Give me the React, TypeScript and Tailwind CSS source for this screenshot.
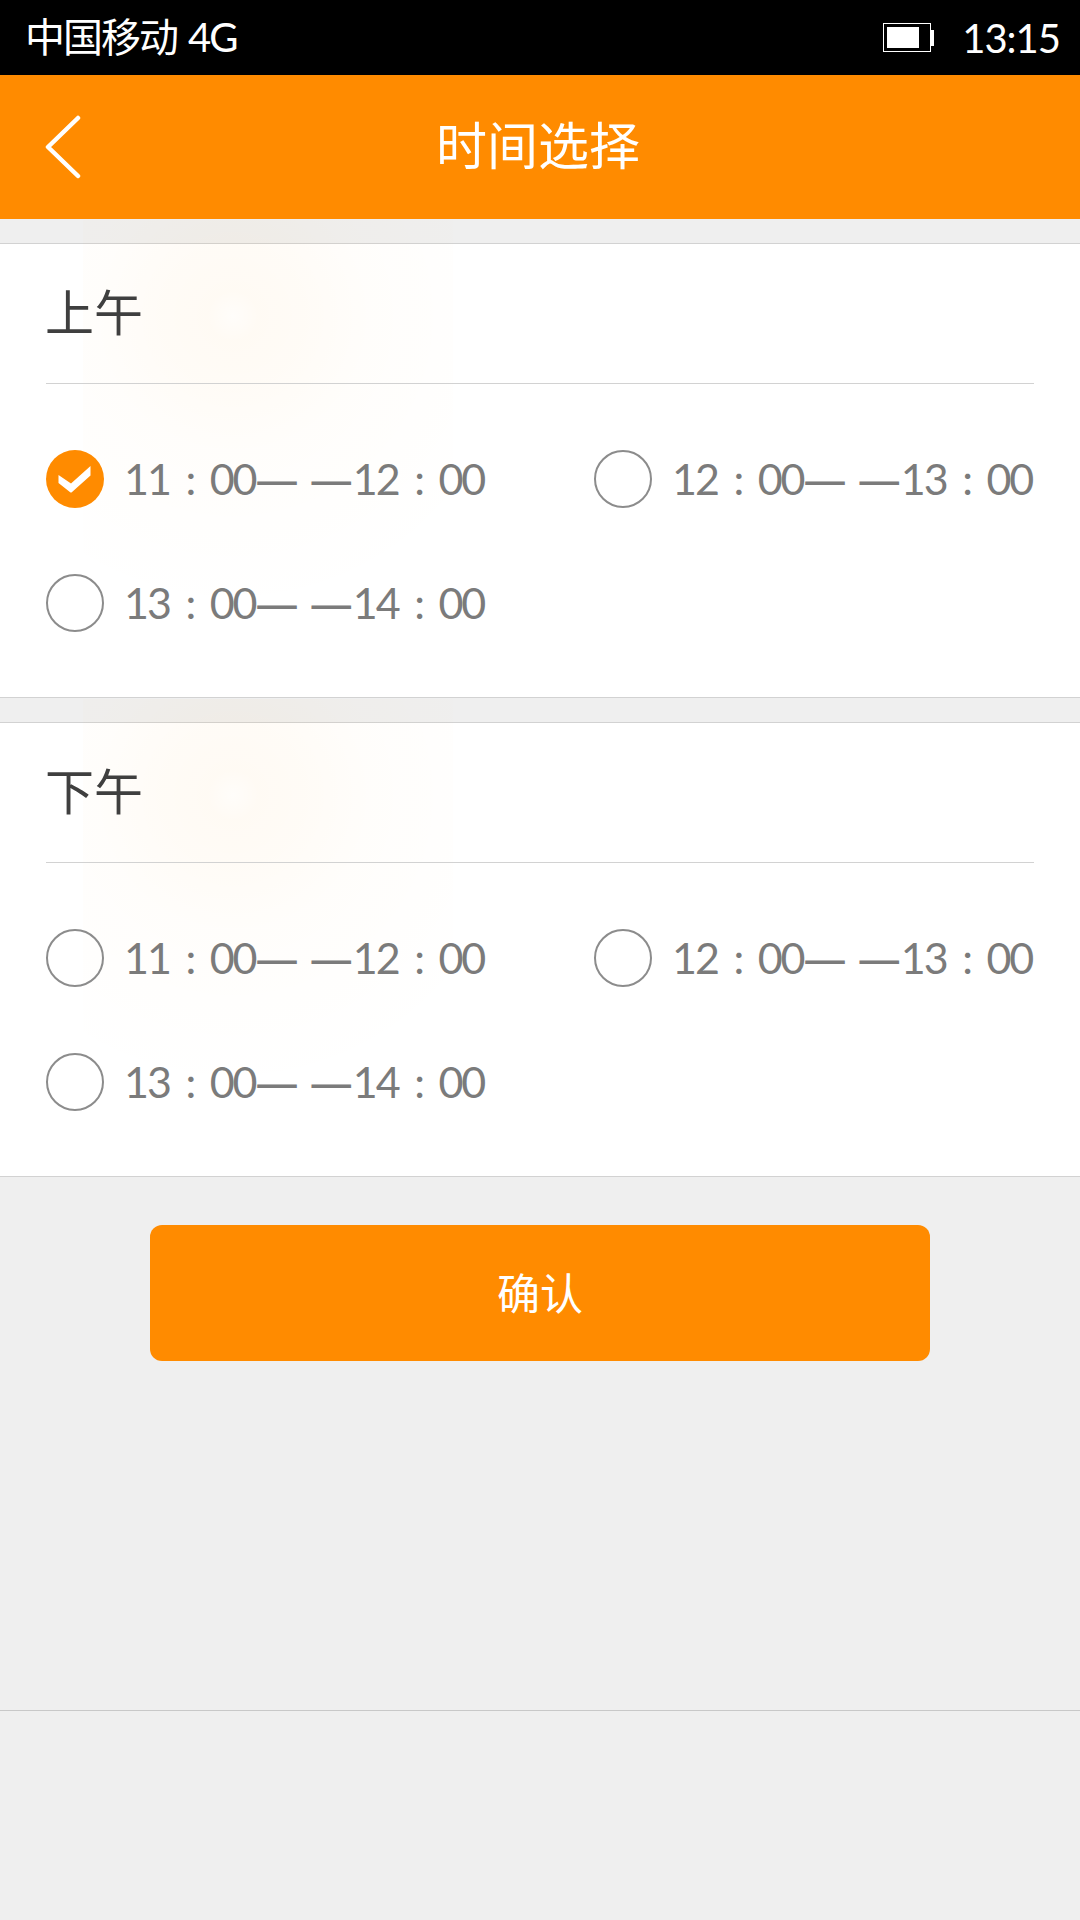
const cjk = "font-['Noto_Sans_CJK_SC','Noto_Sans',sans-serif]";

function Check() {
  return (
    <svg width="58" height="58" viewBox="0 0 58 58" className="shrink-0">
      <circle cx="29" cy="29" r="29" fill="#ff8b00" />
      <path d="M12.5 25 L25 33.5 L44.5 16 V25.5 L25.5 42.5 H24.5 L12.5 33 Z" fill="#fff" />
    </svg>
  );
}

function Clock({ h, m = "00" }: { h: string; m?: string }) {
  return (
    <>
      {h}
      <span className="[word-spacing:6.5px]"> : </span>
      {m}
    </>
  );
}

function TimeOption({ from, to, checked }: { from: string; to: string; checked?: boolean }) {
  return (
    <div className="flex h-[124px] items-center">
      {checked ? <Check /> : <div className="h-[58px] w-[58px] shrink-0 rounded-full border-2 border-[#8c8c8c]" />}
      <span className="ml-[20px] whitespace-nowrap font-['Lato',sans-serif] text-[43px] tracking-[-2px] text-[#7b7b7b]">
        <Clock h={from} />
        <span className="font-['Noto_Sans',sans-serif] tracking-normal">— —</span>
        <Clock h={to} />
      </span>
    </div>
  );
}

function Section({ title, first }: { title: string; first?: boolean }) {
  return (
    <section className="relative border-y border-[#d2d2d2] bg-white">
      {/* faint watermark glow */}
      <div className="pointer-events-none absolute left-[83px] top-[-24px] h-[480px] w-[370px] bg-[radial-gradient(circle_at_150px_96px,rgba(255,150,0,0.02)_0px,rgba(255,150,0,0.045)_25px,rgba(255,150,0,0.035)_70px,rgba(255,150,0,0.016)_140px,rgba(255,150,0,0)_300px)]" />
      <div className="relative px-[46px]">
        <h2 className={`${cjk} -ml-px flex h-[139px] items-center pb-[8px] text-[49px] font-normal text-[#3f3f3f]`}>{title}</h2>
        <div className="h-px bg-[#d2d2d2]" />
        <div className="grid grid-cols-[548px_1fr] pb-[32px] pt-[33px]">
          <TimeOption from="11" to="12" checked={first} />
          <TimeOption from="12" to="13" />
          <TimeOption from="13" to="14" />
        </div>
      </div>
    </section>
  );
}

export default function App() {
  return (
    <div className={`${cjk} h-[1920px] w-[1080px] overflow-hidden bg-[#efefef]`}>
      <div className="flex h-[75px] items-center justify-between bg-black pl-[25px] pr-[20px] text-white">
        <span className="pb-[4px] text-[40px] tracking-[-2px]">
          中国移动
          <span className="ml-[11px] font-['Lato',sans-serif] tracking-[-2px]">4G</span>
        </span>
        <div className="flex items-center">
          <svg width="52" height="30" viewBox="0 0 52 30">
            <rect x="0.5" y="0.5" width="47" height="28" fill="none" stroke="#fff" />
            <rect x="4" y="4" width="32" height="21" fill="#fff" />
            <rect x="48" y="7" width="3" height="16" fill="#fff" />
          </svg>
          <span className="ml-[27px] font-['Lato',sans-serif] text-[40px] tracking-[-1px]">13:15</span>
        </div>
      </div>
      <header className="relative flex h-[144px] items-center justify-center bg-[#ff8b00]">
        <svg width="38" height="64" viewBox="0 0 38 64" className="absolute left-[44px] top-[40px]">
          <path d="M34 3 L4 32 L34 61" fill="none" stroke="#fff" strokeWidth="4.5" strokeLinecap="round" strokeLinejoin="round" />
        </svg>
        <h1 className="pb-[8px] pr-[4px] text-[51px] font-normal text-white">时间选择</h1>
      </header>
      <div className="h-[24px]" />
      <Section title="上午" first />
      <div className="h-[24px]" />
      <Section title="下午" />
      <button className="mx-auto mt-[48px] flex h-[136px] w-[780px] items-center justify-center rounded-[12px] bg-[#ff8b00] pb-[4px] text-[43px] text-white">
        确认
      </button>
      <div className="mt-[349px] h-px bg-[#c8c8c8]" />
    </div>
  );
}
